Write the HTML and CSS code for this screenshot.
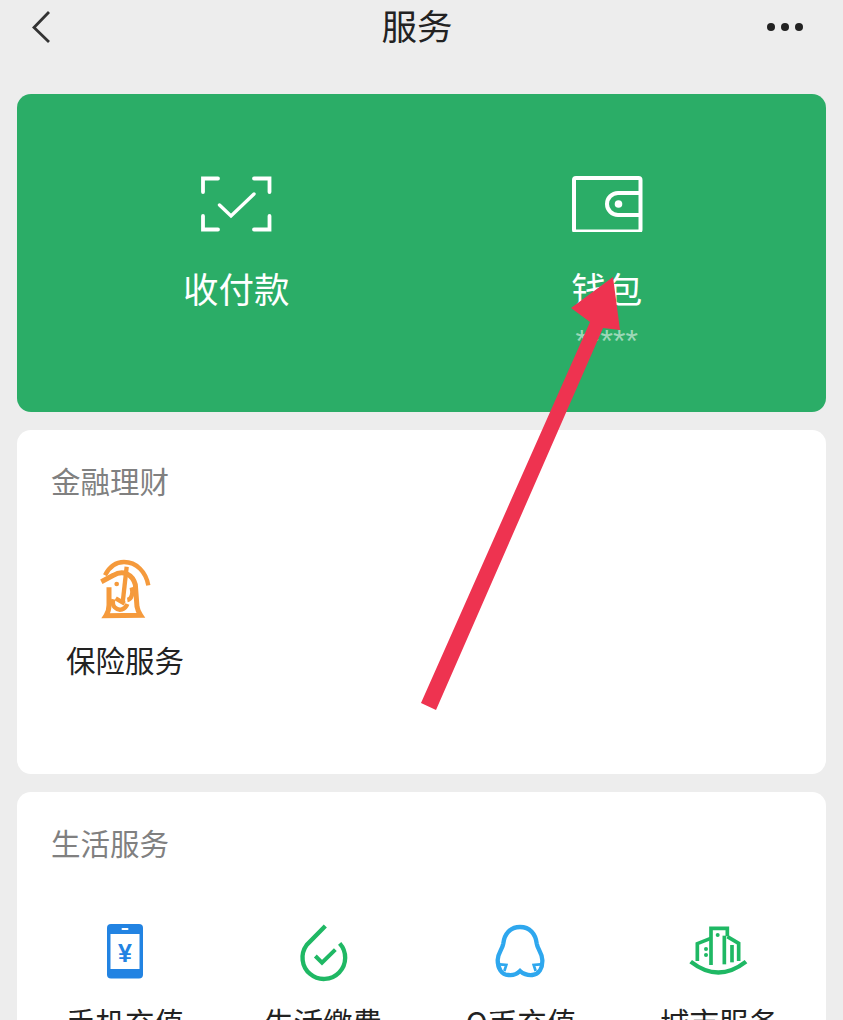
FILE: index.html
```html
<!DOCTYPE html>
<html lang="zh-CN">
<head>
    <meta charset="UTF-8">
    <meta name="viewport" content="width=device-width, initial-scale=1.0">
    <title>服务</title>
    <link rel="stylesheet" href="styles.css">
</head>
<body>
    <div class="page">
        <header class="topbar">
            <div class="back">
                <svg width="18" height="32" viewBox="0 0 18 32"><path d="M17 1 L2 16.5 L17 31" fill="none" stroke="#333" stroke-width="2.8"/></svg>
            </div>
            <h1 class="title">服务</h1>
            <div class="more"><span></span><span></span><span></span></div>
        </header>

        <section class="hero">
            <div class="hero-item">
                <svg class="hero-icon" width="72" height="56" viewBox="0 0 72 56" fill="none" stroke="#fff" stroke-width="3.8" stroke-linecap="round">
                    <path d="M18 2.5 H3 V16"/>
                    <path d="M54 2.5 H69.5 V16"/>
                    <path d="M3 40 V53.5 H18"/>
                    <path d="M69.5 40 V53.5 H54"/>
                    <path d="M19.5 29 L31 40 L54 18" stroke-width="3.4"/>
                </svg>
                <div class="hero-label">收付款</div>
            </div>
            <div class="hero-item">
                <svg class="hero-icon" width="72" height="56" viewBox="0 0 72 56" fill="none" stroke="#fff" stroke-width="4">
                    <rect x="3" y="2" width="66.5" height="53.5" rx="2"/>
                    <path d="M69 17 H47 A11 11 0 0 0 47 39 H69"/>
                    <circle cx="47.5" cy="28" r="3.8" fill="#fff" stroke="none"/>
                </svg>
                <div class="hero-label">钱包</div>
                <div class="hero-sub">*****</div>
            </div>
        </section>

        <section class="card card-finance">
            <h2 class="card-title">金融理财</h2>
            <div class="grid">
                <div class="item">
                    <svg class="item-icon" width="56" height="60" viewBox="21 27 168 180" fill="none" stroke="#f59a3c" stroke-width="15">
                        <path d="M45 76 C58 50 78 36 102 36 C140 36 168 66 175 106" stroke-width="13"/>
                        <path d="M34 95 L70 76 C100 58 128 74 136 104 L141 170 C143 182 148 190 152 196 L48 197 C54 188 57 178 57 165 V112"/>
                        <path d="M110 50 L98 158" stroke-width="13"/>
                        <path d="M77 145 L104 161" stroke-width="13"/>
                        <path d="M125 112 C130 130 125 148 112 150 M112 162 C106 178 88 186 74 172 C68 166 68 156 70 148" stroke-width="13"/>
                        <circle cx="80" cy="102" r="7" fill="#f59a3c" stroke="none"/>
                    </svg>
                    <div class="item-label">保险服务</div>
                </div>
            </div>
        </section>

        <section class="card">
            <h2 class="card-title">生活服务</h2>
            <div class="grid">
                <div class="item">
                    <svg class="item-icon" width="56" height="60" viewBox="0 0 56 60">
                        <rect x="10" y="3" width="36" height="54.5" rx="4" fill="#2283e2"/>
                        <rect x="13.5" y="13" width="29" height="35" fill="#fff"/>
                        <rect x="24.5" y="7" width="7" height="2" rx="1" fill="#fff"/>
                        <text class="yen" x="28" y="41" text-anchor="middle">¥</text>
                    </svg>
                    <div class="item-label">手机充值</div>
                </div>
                <div class="item">
                    <svg class="item-icon" width="56" height="60" viewBox="765 30 168 180" fill="none" stroke="#1fb864" stroke-width="13">
                        <path d="M856 45 L800 102 A64 64 0 1 0 899 97"/>
                        <path d="M826 135 L846 155 L886 116" stroke-width="12"/>
                    </svg>
                    <div class="item-label">生活缴费</div>
                </div>
                <div class="item">
                    <svg class="item-icon" width="56" height="60" viewBox="24 18 168 180" fill="none" stroke="#2ea7ee" stroke-width="13">
                        <path d="M105 36 C75 36 58 58 55 85 C52 105 38 113 38 135 C38 160 50 180 70 180 C85 182 98 175 105 168 C112 175 128 182 142 180 C162 178 173 160 172 135 C172 113 158 105 155 85 C152 58 135 36 105 36 Z"/>
                        <path d="M44 148 L64 150 L58 168 M166 148 L146 150 L152 168" stroke-width="8"/>
                    </svg>
                    <div class="item-label">Q币充值</div>
                </div>
                <div class="item">
                    <svg class="item-icon" width="56" height="60" viewBox="33 18 168 180" fill="none" stroke="#1fb864" stroke-width="11">
                        <path d="M32 140 Q115 205 198 140" stroke-width="13"/>
                        <path d="M52 138 V86 L92 70"/>
                        <path d="M93 150 V40 H142 V64"/>
                        <path d="M133 62 V148"/>
                        <path d="M142 65 L176 85 V138"/>
                        <path d="M156 90 V142"/>
                        <circle cx="113" cy="60" r="6" fill="#1fb864" stroke="none"/>
                        <circle cx="78" cy="102" r="6" fill="#1fb864" stroke="none"/>
                        <circle cx="78" cy="120" r="6" fill="#1fb864" stroke="none"/>
                    </svg>
                    <div class="item-label">城市服务</div>
                </div>
            </div>
        </section>

        <!-- red arrow drawn over the screenshot -->
        <svg class="arrow" width="843" height="1020" viewBox="0 0 843 1020">
            <path d="M421 703 L590 322 L571 308 L613 277 L620 330 L603 328 L436 710 Z" fill="#ee3350"/>
        </svg>
    </div>
</body>
</html>
```

FILE: styles.css
```css
html, body {
    margin: 0;
    padding: 0;
    height: 100%;
    overflow: hidden;
}
body {
    background-color: #ededed;
    font-family: "Noto Sans CJK SC", "Liberation Sans", sans-serif;
    color: #222;
}
.page {
    position: relative;
    width: 843px;
    height: 1020px;
    overflow: hidden;
}

/* top bar */
.topbar {
    display: flex;
    justify-content: space-between;
    align-items: center;
    height: 54px;
    padding: 0 40px 40px 32px;
}
.back {
    width: 35px;
    height: 32px;
}
.back svg {
    display: block;
}
.title {
    margin: 0 0 4px;
    font-size: 35.5px;
    font-weight: 400;
    line-height: 50px;
    color: #222;
}
.more {
    display: flex;
    gap: 6px;
}
.more span {
    width: 8px;
    height: 8px;
    border-radius: 50%;
    background-color: #222;
}

/* green card */
.hero {
    display: grid;
    grid-template-columns: 1fr 1fr;
    height: 318px;
    margin: 0 17px 18px;
    padding: 0 34px;
    box-sizing: border-box;
    background-color: #2bad67;
    border-radius: 14px;
    color: #fff;
}
.hero-item {
    display: flex;
    flex-direction: column;
    align-items: center;
    padding-top: 82px;
}
.hero-icon {
    display: block;
}
.hero-label {
    margin-top: 28px;
    font-size: 35.5px;
    line-height: 56px;
}
.hero-sub {
    margin-top: 3px;
    font-family: "Liberation Sans", sans-serif;
    font-size: 32px;
    line-height: 44px;
    color: rgba(255, 255, 255, 0.55);
}

/* white cards */
.card {
    margin: 0 17px 18px;
    padding: 29px 8px 0 9px;
    background-color: #fff;
    border-radius: 14px;
    min-height: 300px;
}
.card-finance {
    box-sizing: border-box;
    height: 344px;
}
.card-title {
    margin: 0 0 0 25px;
    font-size: 29.5px;
    font-weight: 400;
    line-height: 42px;
    color: #808080;
}
.grid {
    display: grid;
    grid-template-columns: repeat(4, 1fr);
    margin-top: 58px;
}
.item {
    display: flex;
    flex-direction: column;
    align-items: center;
}
.item-icon {
    display: block;
    overflow: visible;
}
.item-label {
    margin-top: 20px;
    font-size: 29.5px;
    line-height: 40px;
    white-space: nowrap;
    color: #222;
}
.yen {
    font-family: "Liberation Sans", sans-serif;
    font-size: 25px;
    font-weight: 700;
    fill: #2283e2;
}

/* annotation on top of everything */
.arrow {
    position: absolute;
    top: 0;
    left: 0;
}
```
